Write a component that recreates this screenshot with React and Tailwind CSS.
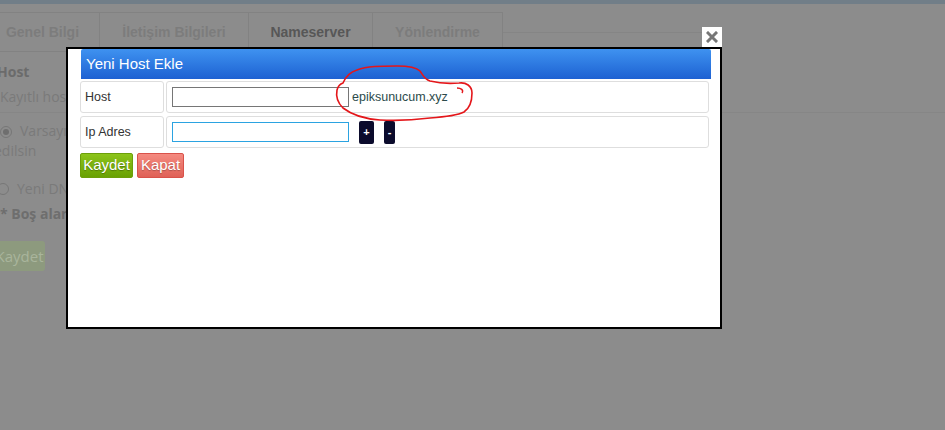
import { useState } from "react";

const tabs = [
  { label: "Genel Bilgi", w: "w-[114px]" },
  { label: "İletişim Bilgileri", w: "w-[149px]" },
  { label: "Nameserver", w: "w-[124px]", active: true },
  { label: "Yönlendirme", w: "w-[130px]" },
];

function BackgroundPage() {
  return (
    <div className="font-['Open_Sans',sans-serif] text-[#7a7a7a]">
      <div className="h-[4px] bg-[#717e88]" />
      <div className="flex h-[48px] pt-[8px]">
        <div className="-ml-[14px] flex border-t border-[#828282]">
          {tabs.map((t) => (
            <div
              key={t.label}
              className={`${t.w} flex h-[39px] items-center justify-center border-r border-[#828282] font-['Liberation_Sans',Arial,sans-serif] text-[14px] font-bold ${
                t.active ? "text-[#575757]" : "border-b text-[#7c7c7c]"
              }`}
            >
              {t.label}
            </div>
          ))}
        </div>
        <div className="h-[21px] w-[200px] border-b border-[#858585]" />
      </div>

      <div className="-ml-[3px] mt-[9px] text-[14px] font-bold text-[#6b6b6b]">Host</div>
      <div className="mt-[4px] border-b border-[#868686] pb-[5px] text-[14px] text-[#7a7a7a]">
        Kayıtlı host
      </div>
      <div className="mt-[8px] flex items-start gap-[8px] text-[14px]">
        <span className="mt-[5px] flex h-[12px] w-[12px] items-center justify-center rounded-full border border-[#777]">
          <span className="h-[6px] w-[6px] rounded-full bg-[#6e6e6e]" />
        </span>
        <span className="leading-[20px]">Varsayılan</span>
      </div>
      <div className="-ml-[6px] text-[14px] leading-[20px]">edilsin</div>
      <div className="-ml-[3px] mt-[17px] flex items-center gap-[8px] text-[14px]">
        <span className="h-[12px] w-[12px] rounded-full border border-[#777]" />
        <span>Yeni DNS</span>
      </div>
      <div className="mt-[4px] text-[14px] font-bold text-[#6e6e6e]">
        * Boş alanlar
      </div>
      <div className="-ml-[6px] mt-[17px] flex h-[30px] w-[51px] items-center justify-center rounded-[3px] bg-[#8d9a7e] text-[15px] text-[#a9b59c]">
        Kaydet
      </div>
    </div>
  );
}

function Scribble() {
  return (
    <svg
      className="pointer-events-none absolute left-0 top-0"
      width="945"
      height="430"
      viewBox="0 0 945 430"
    >
      <path
        d="M343 83 C346 76 350 72 357 70 C367 66 381 66 397 66 C407 66 416 67 420 71 C423 75 424 79 430 81 C438 83 448 84 459 83 C466 82 472 86 472 93 C472 101 470 108 464 112 C456 116 444 117 430 118 C414 120 398 121 380 120 C366 119 352 115 343 108 C337 102 336 95 337 90 C338 86 340 84 343 83"
        fill="none"
        stroke="#e4161a"
        strokeWidth="1.6"
        strokeLinecap="round"
      />
      <path d="M457 88 C461 88 464 90 462 93" fill="none" stroke="#e4161a" strokeWidth="1.4" />
    </svg>
  );
}

function HostModal() {
  const [host, setHost] = useState("");
  const [ip, setIp] = useState("");

  return (
    <div className="absolute left-[66px] top-[47px] h-[282px] w-[656px] border-2 border-black bg-white pl-[12px] font-['Liberation_Sans',Arial,sans-serif]">
      <div className="ml-[1px] flex h-[30px] w-[630px] items-center rounded-t-[2px] bg-gradient-to-b from-[#3f92f0] to-[#1e61d2] pl-[5px] text-[15px] text-white">
        Yeni Host Ekle
      </div>

      <div className="mt-[2px] flex w-[629px] flex-col gap-[3px]">
        <div className="flex h-[32px] gap-[2px]">
          <div className="flex w-[84px] items-center rounded-[3px] border border-[#dedede] pl-[4px] text-[12.5px] text-[#333]">
            Host
          </div>
          <div className="flex flex-1 items-center rounded-[3px] border border-[#dedede] pl-[5px]">
            <input
              value={host}
              onChange={(e) => setHost(e.target.value)}
              className="h-[20px] w-[177px] border border-[#767676] bg-white px-1 text-[12px] outline-none"
            />
            <span className="ml-[3px] text-[12.5px] text-[#2c4b4b]">epiksunucum.xyz</span>
          </div>
        </div>

        <div className="flex h-[32px] gap-[2px]">
          <div className="flex w-[84px] items-center rounded-[3px] border border-[#dedede] pl-[4px] text-[12.5px] text-[#333]">
            Ip Adres
          </div>
          <div className="flex flex-1 items-center rounded-[3px] border border-[#dedede] pl-[5px]">
            <input
              value={ip}
              onChange={(e) => setIp(e.target.value)}
              className="h-[20px] w-[177px] border border-[#2ba3e1] bg-white px-1 text-[12px] outline-none"
            />
            <button className="ml-[10px] flex h-[23px] w-[15px] items-center justify-center rounded-[2px] bg-[#0b0b2c] text-[11px] font-bold text-white">
              +
            </button>
            <button className="ml-[10px] flex h-[23px] w-[11px] items-center justify-center rounded-[2px] bg-[#0b0b2c] text-[11px] font-bold text-white">
              -
            </button>
          </div>
        </div>
      </div>

      <div className="mt-[5px] flex gap-[4px]">
        <button className="flex h-[25px] w-[53px] items-center justify-center rounded-[2px] border border-[#6c9f0a] bg-gradient-to-b from-[#8cc41a] to-[#69a103] text-[15px] text-white [text-shadow:0_1px_1px_rgba(0,0,0,0.3)]">
          Kaydet
        </button>
        <button className="flex h-[25px] w-[47px] items-center justify-center rounded-[2px] border border-[#d9524a] bg-gradient-to-b from-[#f48a80] to-[#df6157] text-[15px] text-white [text-shadow:0_1px_1px_rgba(0,0,0,0.25)]">
          Kapat
        </button>
      </div>
    </div>
  );
}

export default function App() {
  return (
    <div className="relative h-[430px] w-[945px] overflow-hidden bg-[#8c8c8c]">
      <BackgroundPage />
      <HostModal />
      <button className="absolute left-[702px] top-[27px] flex h-[20px] w-[20px] items-center justify-center bg-white">
        <svg width="12" height="12" viewBox="0 0 12 12">
          <path d="M2 2 L10 10 M10 2 L2 10" stroke="#777" strokeWidth="3" strokeLinecap="square" />
        </svg>
      </button>
      <Scribble />
    </div>
  );
}
